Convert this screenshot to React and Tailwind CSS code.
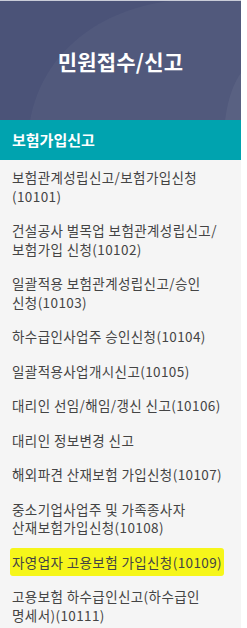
import React from "react";

const items = [
  ["보험관계성립신고/보험가입신청", "(10101)"],
  ["건설공사 벌목업 보험관계성립신고/", "보험가입 신청(10102)"],
  ["일괄적용 보험관계성립신고/승인", "신청(10103)"],
  ["하수급인사업주 승인신청(10104)"],
  ["일괄적용사업개시신고(10105)"],
  ["대리인 선임/해임/갱신 신고(10106)"],
  ["대리인 정보변경 신고"],
  ["해외파견 산재보험 가입신청(10107)"],
  ["중소기업사업주 및 가족종사자", "산재보험가입신청(10108)"],
  ["자영업자 고용보험 가입신청(10109)", null, true],
  ["고용보험 하수급인신고(하수급인", "명세서)(10111)"],
];

const App = () => {
  return (
    <div
      className="w-[247px] bg-white"
      style={{ fontFamily: '"Noto Sans CJK KR", "Noto Sans", sans-serif' }}
    >
      <div className="w-[241px] border-b-2 border-[#9a9a9a]">
        {/* top title */}
        <div className="relative h-[120px] overflow-hidden bg-[#4b5378] border-t border-[#c9ccd8] flex items-center justify-center">
          <svg
            className="absolute inset-0"
            width="241"
            height="120"
            viewBox="0 0 241 120"
          >
            <path
              d="M30 120 C 40 60, 90 10, 170 0 L 241 0 L 241 120 Z"
              fill="#ffffff"
              fillOpacity="0.035"
            />
            <path
              d="M225 120 C 228 95, 235 80, 241 72 L 241 120 Z"
              fill="#ffffff"
              fillOpacity="0.05"
            />
          </svg>
          <h1 className="relative text-white text-[21px] font-bold tracking-[0.2px] pt-[2px]">
            민원접수/신고
          </h1>
        </div>

        {/* section header */}
        <div className="h-[40px] bg-[#00a3af] flex items-center px-3">
          <h2 className="text-white text-[15px] font-bold">보험가입신고</h2>
        </div>

        {/* menu list */}
        <ul className="bg-[#f5f5f5]">
          {items.map(([a, b, hi], i) => (
            <li
              key={i}
              className="px-3 py-[8px] text-[13.5px] leading-[18.5px] text-[#444] tracking-[0.4px]"
            >
              {hi ? (
                <span className="bg-[#f6f61a] -mx-[2px] px-[2px] py-[4px] rounded-[3px]">
                  {a}
                </span>
              ) : (
                <>
                  <div>{a}</div>
                  {b && <div>{b}</div>}
                </>
              )}
            </li>
          ))}
        </ul>
      </div>
    </div>
  );
};

export default App;
